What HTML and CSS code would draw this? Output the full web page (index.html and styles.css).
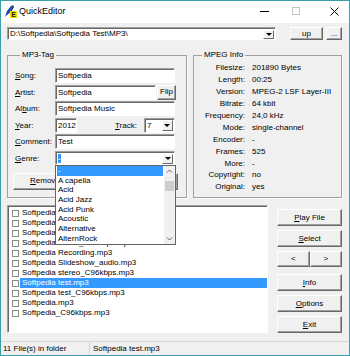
FILE: index.html
```html
<!DOCTYPE html>
<html lang="en">
<head>
    <meta charset="UTF-8">
    <title>QuickEditor</title>
    <link rel="stylesheet" href="styles.css">
</head>
<body>
<div class="window">
    <div class="titlebar">
        <svg class="app-icon" width="13" height="13" viewBox="0 0 13 13">
            <polygon points="1,12 3,6 7,1 9,0 8,3 5,8 3,10" fill="#1d3fb8"/>
            <polygon points="3,10 5,8 8,3 9,0 10,2 7,7" fill="#0a1a6e"/>
            <rect x="6" y="6" width="7" height="7" fill="#f2e600"/>
            <text x="7.2" y="12.3" font-family="Liberation Sans, sans-serif" font-size="7" font-weight="bold" fill="#1a1a1a">E</text>
        </svg>
        <span class="title">QuickEditor</span>
        <div class="controls">
            <svg class="ctl-min" width="9" height="9" viewBox="0 0 9 9"><line x1="0" y1="4.5" x2="9" y2="4.5" stroke="#000" stroke-width="1"/></svg>
            <svg class="ctl-max" width="8" height="8" viewBox="0 0 8 8"><rect x="0.5" y="0.5" width="7" height="7" fill="none" stroke="#c4c4c4"/></svg>
            <svg class="ctl-close" width="9" height="9" viewBox="0 0 9 9"><path d="M0.5 0.5 L8.5 8.5 M8.5 0.5 L0.5 8.5" stroke="#000" stroke-width="1"/></svg>
        </div>
    </div>

    <div class="client">
        <div class="path-row">
            <div class="field combo path-combo">
                <span class="field-text">D:\Softpedia\Softpedia Test\MP3\</span>
                <span class="drop-btn"><span class="arrow"></span></span>
            </div>
            <button class="btn up-btn">up</button>
            <button class="btn dots-btn">...</button>
        </div>

        <div class="groups">
            <fieldset class="group tag-group">
                <legend>MP3-Tag</legend>
                <div class="tag-form">
                    <div class="tag-row">
                        <label><u>S</u>ong:</label>
                        <div class="field wide"><span class="field-text">Softpedia</span></div>
                    </div>
                    <div class="tag-row">
                        <label><u>A</u>rtist:</label>
                        <div class="field artist"><span class="field-text">Softpedia</span></div>
                        <button class="btn flip-btn">Flip</button>
                    </div>
                    <div class="tag-row">
                        <label>Al<u>b</u>um:</label>
                        <div class="field wide"><span class="field-text">Softpedia Music</span></div>
                    </div>
                    <div class="tag-row">
                        <label><u>Y</u>ear:</label>
                        <div class="field year"><span class="field-text">2012</span></div>
                        <label class="track-label"><u>T</u>rack:</label>
                        <div class="field combo track">
                            <span class="field-text">7</span>
                            <span class="drop-btn"><span class="arrow"></span></span>
                        </div>
                    </div>
                    <div class="tag-row">
                        <label><u>C</u>omment:</label>
                        <div class="field wide"><span class="field-text">Test</span></div>
                    </div>
                    <div class="tag-row">
                        <label><u>G</u>enre:</label>
                        <div class="field combo wide genre">
                            <span class="field-text"><span class="sel">-</span></span>
                            <span class="drop-btn"><span class="arrow"></span></span>
                        </div>
                    </div>
                </div>
                <button class="btn remove-btn"><u>R</u>emove ID3 Tag</button>
            </fieldset>

            <fieldset class="group info-group">
                <legend>MPEG Info</legend>
                <dl class="info-list">
                    <dt>Filesize:</dt><dd>201890 Bytes</dd>
                    <dt>Length:</dt><dd>00:25</dd>
                    <dt>Version:</dt><dd>MPEG-2 LSF Layer-III</dd>
                    <dt>Bitrate:</dt><dd>64 kbit</dd>
                    <dt>Frequency:</dt><dd>24,0 kHz</dd>
                    <dt>Mode:</dt><dd>single-channel</dd>
                    <dt>Encoder:</dt><dd>-</dd>
                    <dt>Frames:</dt><dd>525</dd>
                    <dt>More:</dt><dd>-</dd>
                    <dt>Copyright:</dt><dd>no</dd>
                    <dt>Original:</dt><dd>yes</dd>
                </dl>
            </fieldset>
        </div>

        <div class="main-row">
            <div class="file-list">
                <div class="file-item"><span class="check"></span><span class="file-name">Softpedia Mono.mp3</span></div>
                <div class="file-item"><span class="check"></span><span class="file-name">Softpedia Mono_C96kbps.mp3</span></div>
                <div class="file-item"><span class="check"></span><span class="file-name">Softpedia Music.mp3</span></div>
                <div class="file-item"><span class="check"></span><span class="file-name">Softpedia Music_C96kbps.mp3</span></div>
                <div class="file-item"><span class="check"></span><span class="file-name">Softpedia Recording.mp3</span></div>
                <div class="file-item"><span class="check"></span><span class="file-name">Softpedia Slideshow_audio.mp3</span></div>
                <div class="file-item"><span class="check"></span><span class="file-name">Softpedia stereo_C96kbps.mp3</span></div>
                <div class="file-item selected"><span class="check"></span><span class="file-name">Softpedia test.mp3</span></div>
                <div class="file-item"><span class="check"></span><span class="file-name">Softpedia test_C96kbps.mp3</span></div>
                <div class="file-item"><span class="check"></span><span class="file-name">Softpedia.mp3</span></div>
                <div class="file-item"><span class="check"></span><span class="file-name">Softpedia_C96kbps.mp3</span></div>
            </div>
            <div class="side-buttons">
                <button class="btn side-btn"><u>P</u>lay File</button>
                <button class="btn side-btn"><u>S</u>elect</button>
                <div class="nav-buttons">
                    <button class="btn nav-btn">&lt;</button>
                    <button class="btn nav-btn">&gt;</button>
                </div>
                <button class="btn side-btn info-btn"><u>I</u>nfo</button>
                <button class="btn side-btn"><u>O</u>ptions</button>
                <button class="btn side-btn"><u>E</u>xit</button>
            </div>
        </div>

        <div class="statusbar">
            <div class="status-panel count">11 File(s) in folder</div>
            <div class="status-panel current">Softpedia test.mp3</div>
        </div>
    </div>

    <!-- open genre list, drawn over the form -->
    <div class="genre-dropdown">
        <div class="dd-items">
            <div class="dd-item active">-</div>
            <div class="dd-item">A capella</div>
            <div class="dd-item">Acid</div>
            <div class="dd-item">Acid Jazz</div>
            <div class="dd-item">Acid Punk</div>
            <div class="dd-item">Acoustic</div>
            <div class="dd-item">Alternative</div>
            <div class="dd-item">AlternRock</div>
        </div>
        <div class="dd-scroll">
            <svg class="dd-arrow" width="11" height="11" viewBox="0 0 11 11"><path d="M3 6.5 L5.5 4 L8 6.5" fill="none" stroke="#606060" stroke-width="1"/></svg>
            <div class="dd-thumb"></div>
            <svg class="dd-arrow bottom" width="11" height="11" viewBox="0 0 11 11"><path d="M3 4.5 L5.5 7 L8 4.5" fill="none" stroke="#606060" stroke-width="1"/></svg>
        </div>
    </div>
</div>
</body>
</html>
```

FILE: styles.css
```css
body {
    margin: 0;
    font-family: "Liberation Sans", Arial, sans-serif;
    font-size: 8px;
    color: #000;
    background: #fff;
}

.window {
    position: relative;
    width: 350px;
    height: 356px;
    box-sizing: border-box;
    border: 1px solid #3a9fa6;
    background: #f0f0f0;
    display: flex;
    flex-direction: column;
}

/* title bar */
.titlebar {
    height: 22px;
    flex-shrink: 0;
    background: #fff;
    display: flex;
    align-items: center;
}

.app-icon {
    margin-left: 3px;
    margin-top: -2px;
}

.title {
    margin-left: 2px;
    margin-top: -2px;
    font-size: 9px;
}

.controls {
    margin-left: auto;
    display: flex;
    align-items: center;
    margin-top: -2px;
}

.ctl-min {
    margin-right: 23px;
}

.ctl-max {
    margin-right: 30px;
}

.ctl-close {
    margin-right: 10px;
}

.client {
    flex: 1;
    display: flex;
    flex-direction: column;
}

/* shared controls */
.field {
    box-sizing: border-box;
    height: 15px;
    background: #fff;
    border: 1px solid;
    border-color: #a0a0a0 #fff #fff #a0a0a0;
    box-shadow: inset 1px 1px 0 #696969;
    display: flex;
    align-items: center;
    overflow: hidden;
    white-space: nowrap;
}

.field-text {
    padding-left: 2px;
    flex: 1;
}

.combo {
    padding-right: 1px;
}

.drop-btn {
    box-sizing: border-box;
    width: 11px;
    height: calc(100% - 2px);
    margin-top: 1px;
    background: #f0f0f0;
    border: 1px solid;
    border-color: #fff #696969 #696969 #fff;
    display: flex;
    align-items: center;
    justify-content: center;
}

.arrow {
    width: 0;
    height: 0;
    border-left: 3px solid transparent;
    border-right: 3px solid transparent;
    border-top: 3px solid #000;
}

.btn {
    box-sizing: border-box;
    margin: 0;
    padding: 0;
    font-family: inherit;
    font-size: 8px;
    color: #000;
    background: #f0f0f0;
    border: 1px solid;
    border-color: #fff #696969 #696969 #fff;
    box-shadow: inset -1px -1px 0 #a0a0a0;
    line-height: 1;
}

/* path row */
.path-row {
    display: flex;
    margin-top: 4px;
    padding-left: 6px;
}

.path-combo {
    width: 269px;
    height: 13px;
}

.up-btn {
    width: 33px;
    height: 13px;
    margin-left: 14px;
}

.dots-btn {
    width: 16px;
    height: 13px;
    margin-left: 3px;
}

/* group boxes */
.groups {
    display: flex;
    gap: 6px;
    margin-top: 10px;
    padding-left: 6px;
}

.group {
    margin: 0;
    min-width: 0;
    box-sizing: border-box;
    height: 148px;
    border: 1px solid #a0a0a0;
    box-shadow: 1px 1px 0 #fff;
}

.group legend {
    padding: 0 2px;
    margin-left: 5px;
    line-height: 10px;
}

.tag-group {
    width: 180px;
    padding: 8px 8px 0 7px;
}

.tag-form {
    display: flex;
    flex-direction: column;
    gap: 1.6px;
}

.tag-row {
    display: flex;
    align-items: center;
    height: 15px;
}

.tag-row label {
    width: 40px;
    flex-shrink: 0;
}

.field.wide {
    width: 120px;
}

.field.artist {
    width: 101px;
}

.flip-btn {
    width: 19px;
    height: 15px;
    margin-left: 1px;
}

.field.year {
    width: 22px;
}

.tag-row .track-label {
    width: auto;
    margin-left: 38px;
}

.field.track {
    width: 31px;
    margin-left: 7px;
}

.field.genre {
    height: 14px;
}

.sel {
    background: #3399ff;
    color: #fff;
}

.remove-btn {
    display: block;
    width: 165px;
    height: 17px;
    margin: 7px 0 0 -2px;
    text-align: left;
    padding-left: 16px;
}

.info-group {
    width: 149px;
    padding: 2px 4px 0 3px;
}

.info-list {
    margin: 0;
    display: grid;
    grid-template-columns: 48px 1fr;
    grid-auto-rows: 11.9px;
    column-gap: 7px;
    align-items: center;
    white-space: nowrap;
}

.info-list dt {
    text-align: right;
}

.info-list dd {
    margin: 0;
}

/* file list and buttons */
.main-row {
    display: flex;
    margin-top: 7px;
    padding-left: 6px;
}

.file-list {
    box-sizing: border-box;
    width: 261px;
    height: 128px;
    background: #fff;
    border: 1px solid;
    border-color: #a0a0a0 #fff #fff #a0a0a0;
    box-shadow: inset 1px 1px 0 #696969;
    padding-top: 2px;
}

.file-item {
    height: 10px;
    display: flex;
    align-items: center;
    white-space: nowrap;
}

.check {
    box-sizing: border-box;
    width: 7px;
    height: 7px;
    margin-left: 4px;
    border: 1px solid #8a8a8a;
    background: #fff;
    flex-shrink: 0;
}

.file-name {
    flex: 1;
    margin-left: 1px;
    padding-left: 2px;
    line-height: 10px;
}

.file-item.selected .file-name {
    background: #3399ff;
    color: #fff;
}

.side-buttons {
    width: 65px;
    margin-left: 9px;
    padding-top: 4px;
    display: flex;
    flex-direction: column;
    gap: 4px;
}

.side-btn {
    height: 17px;
}

.nav-buttons {
    display: flex;
    height: 16px;
}

.nav-btn {
    flex: 1;
    height: 16px;
}

.info-btn {
    margin-top: 3px;
}

.statusbar {
    margin-top: auto;
    height: 13px;
    border-top: 1px solid #d7d7d7;
    display: flex;
    align-items: center;
}

.status-panel {
    height: 100%;
    display: flex;
    align-items: center;
    padding-left: 2px;
    box-sizing: border-box;
}

.status-panel.count {
    width: 89px;
    border-right: 1px solid #d7d7d7;
}

.status-panel.current {
    padding-left: 3px;
}

/* genre dropdown list */
.genre-dropdown {
    position: absolute;
    left: 54px;
    top: 164px;
    width: 121px;
    height: 80px;
    box-sizing: border-box;
    border: 1px solid #646464;
    background: #fff;
    display: flex;
}

.dd-items {
    flex: 1;
    padding: 0 1px;
}

.dd-item {
    height: 9.7px;
    line-height: 9.7px;
    padding-left: 1px;
    white-space: nowrap;
}

.dd-item.active {
    background: #3399ff;
    color: #fff;
}

.dd-scroll {
    width: 11px;
    background: #f0f0f0;
    display: flex;
    flex-direction: column;
}

.dd-thumb {
    height: 10px;
    margin: 4px 1px 0;
    background: #cdcdcd;
}

.dd-arrow.bottom {
    margin-top: auto;
}
```
